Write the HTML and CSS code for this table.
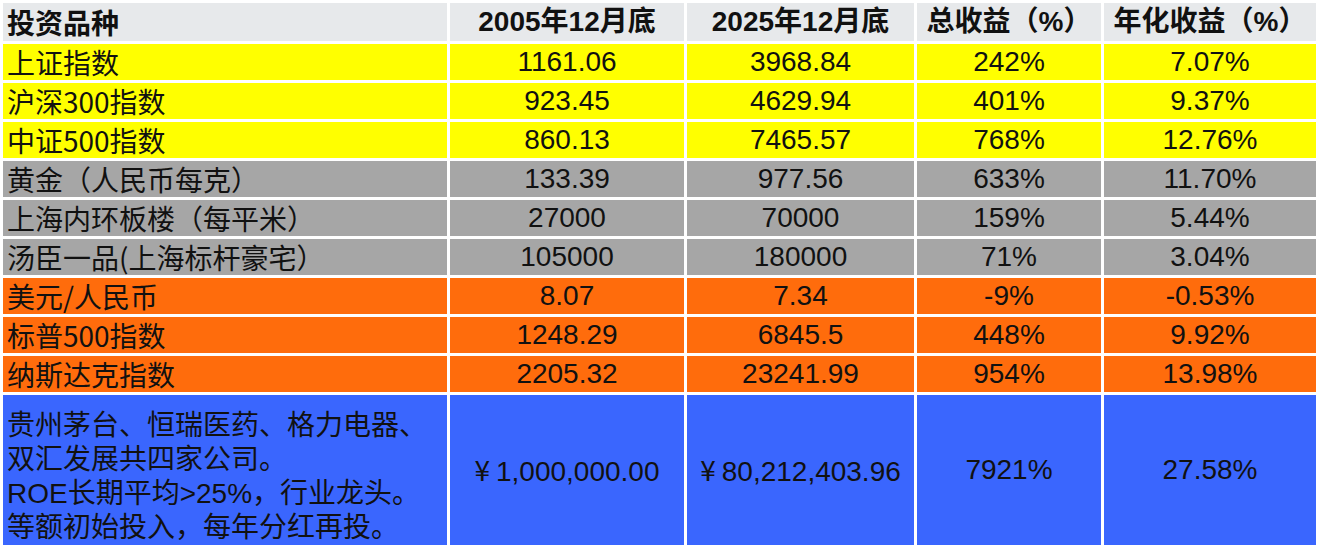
FILE: index.html
```html
<!DOCTYPE html>
<html lang="zh-CN">
<head>
<meta charset="utf-8">
<title>投资品种收益对比</title>
<link rel="stylesheet" href="styles.css">
</head>
<body>
<table class="grid">
  <colgroup>
    <col class="c1"><col class="c2"><col class="c3"><col class="c4"><col class="c5">
  </colgroup>
  <thead>
    <tr class="head">
      <th class="name">投资品种</th>
      <th>2005年12月底</th>
      <th>2025年12月底</th>
      <th>总收益（%）</th>
      <th>年化收益（%）</th>
    </tr>
  </thead>
  <tbody>
    <tr class="yellow"><td class="name">上证指数</td><td>1161.06</td><td>3968.84</td><td>242%</td><td>7.07%</td></tr>
    <tr class="yellow"><td class="name">沪深300指数</td><td>923.45</td><td>4629.94</td><td>401%</td><td>9.37%</td></tr>
    <tr class="yellow"><td class="name">中证500指数</td><td>860.13</td><td>7465.57</td><td>768%</td><td>12.76%</td></tr>
    <tr class="gray"><td class="name">黄金（人民币每克）</td><td>133.39</td><td>977.56</td><td>633%</td><td>11.70%</td></tr>
    <tr class="gray"><td class="name">上海内环板楼（每平米）</td><td>27000</td><td>70000</td><td>159%</td><td>5.44%</td></tr>
    <tr class="gray"><td class="name">汤臣一品(上海标杆豪宅）</td><td>105000</td><td>180000</td><td>71%</td><td>3.04%</td></tr>
    <tr class="orange"><td class="name">美元/人民币</td><td>8.07</td><td>7.34</td><td>-9%</td><td>-0.53%</td></tr>
    <tr class="orange"><td class="name">标普500指数</td><td>1248.29</td><td>6845.5</td><td>448%</td><td>9.92%</td></tr>
    <tr class="orange"><td class="name">纳斯达克指数</td><td>2205.32</td><td>23241.99</td><td>954%</td><td>13.98%</td></tr>
    <tr class="blue">
      <td class="name multi">贵州茅台、恒瑞医药、格力电器、<br>双汇发展共四家公司。<br>ROE长期平均&gt;25%，行业龙头。<br>等额初始投入，每年分红再投。</td>
      <td><span class="yen">¥</span>1,000,000.00</td><td><span class="yen">¥</span>80,212,403.96</td><td>7921%</td><td>27.58%</td>
    </tr>
  </tbody>
</table>
</body>
</html>
```

FILE: styles.css
```css
html, body {
  margin: 0;
  padding: 0;
  background: #ffffff;
}

.grid {
  border-collapse: separate;
  border-spacing: 3px;
  table-layout: fixed;
  width: 1319px;
  font-family: "Liberation Sans", "Noto Sans CJK SC", sans-serif;
  font-size: 28px;
  color: #111111;
}

.c1 { width: 444px; }
.c2 { width: 234px; }
.c3 { width: 227px; }
.c4 { width: 184px; }
.c5 { width: 212px; }

.grid th,
.grid td {
  padding: 0;
  text-align: center;
  vertical-align: middle;
  white-space: nowrap;
  line-height: 34px;
}

.head {
  height: 38px;
}

.head th {
  background: #e7e9eb;
  font-weight: bold;
  font-size: 28px;
}

.yellow, .gray, .orange {
  height: 36px;
}

.grid .name {
  text-align: left;
  padding-left: 4px;
  font-family: "Noto Sans CJK SC", sans-serif;
  font-size: 28px;
}

.head th.name {
  font-weight: bold;
}

.yellow td { background: #ffff00; }
.gray td { background: #a6a6a6; }
.orange td { background: #ff6c0c; }

.blue {
  height: 150px;
}

.blue td {
  background: #3a66fe;
}

.grid td.multi {
  font-family: "Liberation Sans", "Noto Sans CJK SC", sans-serif;
  font-size: 28px;
  line-height: 34px;
  padding-top: 14px;
}

.yen {
  font-family: "Noto Sans CJK SC", sans-serif;
  margin-right: 6px;
}
```
